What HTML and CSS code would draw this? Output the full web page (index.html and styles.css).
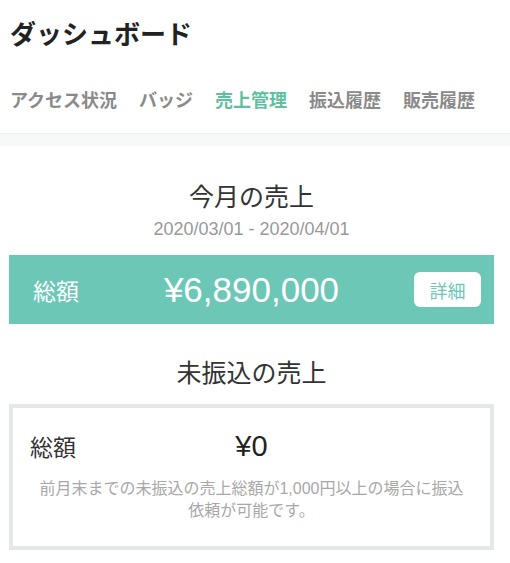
FILE: index.html
```html
<!DOCTYPE html>
<html lang="ja">
<head>
<meta charset="utf-8">
<title>ダッシュボード</title>
<link rel="stylesheet" href="styles.css">
</head>
<body>
<header class="header">
  <h1 class="title">ダッシュボード</h1>
  <nav class="tabs">
    <span class="tab">アクセス状況</span>
    <span class="tab">バッジ</span>
    <span class="tab tab-active">売上管理</span>
    <span class="tab">振込履歴</span>
    <span class="tab">販売履歴</span>
  </nav>
</header>
<div class="divider"></div>
<main class="content">
  <section class="section">
    <h2 class="section-title">今月の売上</h2>
    <p class="period">2020/03/01 - 2020/04/01</p>
    <div class="total-bar">
      <span class="total-label">総額</span>
      <span class="total-amount">¥6,890,000</span>
      <span class="total-action"><button class="detail-btn" type="button">詳細</button></span>
    </div>
  </section>
  <section class="section">
    <h2 class="section-title section-title-2">未振込の売上</h2>
    <div class="unpaid-box">
      <div class="unpaid-row">
        <span class="unpaid-label">総額</span>
        <span class="unpaid-amount">¥0</span>
        <span></span>
      </div>
      <p class="unpaid-note">前月末までの未振込の売上総額が1,000円以上の場合に振込依頼が可能です。</p>
    </div>
  </section>
</main>
</body>
</html>
```

FILE: styles.css
```css
* { box-sizing: border-box; }
html, body { margin: 0; padding: 0; background: #fff; }
body {
  font-family: "Liberation Sans", "Noto Sans CJK JP", sans-serif;
  color: #333;
}
.header {
  padding: 16px 10px 22px;
}
.title {
  margin: 0;
  font-family: "Noto Sans CJK JP", sans-serif;
  font-size: 26px;
  line-height: 34px;
  font-weight: 700;
  color: #222;
}
.tabs {
  margin-top: 37px;
  display: flex;
  gap: 22px;
}
.tab {
  font-family: "Noto Sans CJK JP", sans-serif;
  font-size: 18px;
  line-height: 24px;
  font-weight: 700;
  color: #8a8a8a;
  white-space: nowrap;
}
.tab-active { color: #5fbf9f; }
.divider {
  height: 13px;
  border-top: 1px solid #efefef;
  background: #f7f8f8;
}
.content {
  margin: 0 16px 0 9px;
}
.section { display: flex; flex-direction: column; }
.section-title {
  margin: 31px 0 0;
  text-align: center;
  font-family: "Noto Sans CJK JP", sans-serif;
  font-size: 25px;
  line-height: 36px;
  font-weight: 400;
  color: #333;
}
.section-title-2 { margin-top: 29px; }
.period {
  margin: 4px 0 0;
  text-align: center;
  font-size: 18px;
  line-height: 24px;
  color: #999;
}
.total-bar {
  margin-top: 14px;
  height: 69px;
  background: #6cc7b7;
  display: grid;
  grid-template-columns: 1fr auto 1fr;
  align-items: center;
  padding: 0 13px;
  color: #fff;
}
.total-label {
  margin-left: 11px;
  font-family: "Noto Sans CJK JP", sans-serif;
  font-size: 23px;
  line-height: 30px;
}
.total-amount {
  font-size: 35px;
  line-height: 40px;
}
.total-action { display: flex; justify-content: flex-end; }
.detail-btn {
  width: 67px;
  height: 35px;
  border: none;
  border-radius: 6px;
  background: #fff;
  color: #6cc7b7;
  font-family: "Noto Sans CJK JP", sans-serif;
  font-size: 18px;
  padding: 0;
}
.unpaid-box {
  margin-top: 15px;
  border: 4px solid #e5e8ea;
  padding: 20px 17px 24px;
}
.unpaid-row {
  display: grid;
  grid-template-columns: 1fr auto 1fr;
  align-items: center;
  height: 36px;
}
.unpaid-label {
  font-family: "Noto Sans CJK JP", sans-serif;
  font-size: 23px;
  line-height: 30px;
  color: #333;
}
.unpaid-amount {
  font-size: 29px;
  line-height: 36px;
  color: #222;
}
.unpaid-note {
  margin: 14px 8px 0;
  text-align: center;
  font-size: 16px;
  line-height: 22px;
  color: #a8a8a8;
}
```
